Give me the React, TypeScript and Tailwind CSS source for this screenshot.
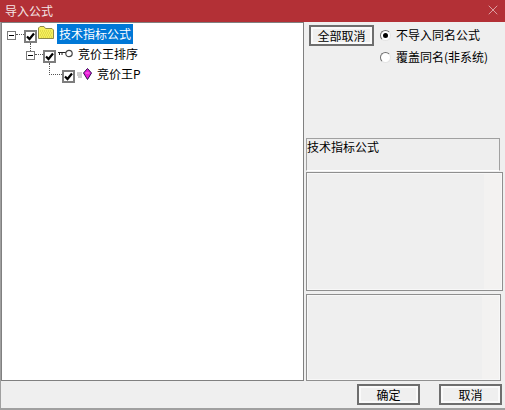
import { X } from 'lucide-react'

const font = { fontFamily: '"Noto Sans CJK SC", "Liberation Sans", sans-serif' }

function Expander() {
  return (
    <span className="mt-[2px] flex h-[9px] w-[9px] shrink-0 items-center justify-center border border-[#7a7a7a] bg-white">
      <span className="h-px w-[5px] bg-black" />
    </span>
  )
}

function Check() {
  return (
    <span className="mt-[4px] flex h-[13px] w-[13px] shrink-0 items-center justify-center border-2 border-[#7d7d7d] bg-white">
      <svg width="9" height="9" viewBox="0 0 9 9">
        <path d="M1 4.5 L3.5 7 L8 1.5" fill="none" stroke="#000" strokeWidth="2.2" />
      </svg>
    </span>
  )
}

function Folder() {
  return (
    <svg width="16" height="13" viewBox="0 0 16 13" className="shrink-0">
      <path d="M0.5 12.5 V2 L2 0.5 H6 L7.5 2.5 H14 L15.5 4 V12.5 Z" fill="#f6f05c" stroke="#8f8a48" />
      <path d="M2 5 H14 M3 7 H14 M2 9 H14 M3 11 H14" stroke="#cfc43a" strokeDasharray="1 1" />
    </svg>
  )
}

function KeyIcon() {
  return (
    <svg width="15" height="9" viewBox="0 0 15 9" className="shrink-0">
      <path d="M0 3.5 H8 M1.5 6 V3.5 M4 6 V3.5" stroke="#222" fill="none" />
      <circle cx="11" cy="4.5" r="3.2" fill="#fff" stroke="#444" strokeWidth="1.2" />
    </svg>
  )
}

function GemIcon() {
  return (
    <svg width="15" height="12" viewBox="0 0 15 12" className="shrink-0">
      <path d="M0 5 H5 M0 7 H5 M1 9 H5" stroke="#999" />
      <path d="M10.5 0.5 L14.5 5 L10.5 11.5 L6.5 5 Z" fill="#e81ad8" stroke="#2c1050" />
      <path d="M8.5 5 H12.5" stroke="#ff7af0" />
    </svg>
  )
}

function Radio({ checked, label }: { checked?: boolean; label: string }) {
  return (
    <div className="flex h-[22px] items-center">
      <span className="flex h-[11px] w-[11px] shrink-0 items-center justify-center rounded-full border border-t-[#6f6f6f] border-l-[#6f6f6f] border-r-[#e4e4e4] border-b-[#e4e4e4] bg-white">
        {checked && <span className="h-[5px] w-[5px] rounded-full bg-black" />}
      </span>
      <span className="ml-[5px] text-xs text-black">{label}</span>
    </div>
  )
}

function Dots({ className }: { className: string }) {
  return <span className={`shrink-0 border-dotted border-[#555] ${className}`} />
}

const dialogButton =
  'border-2 border-[#6e6e6e] bg-[#efefef] text-xs text-black shadow-[inset_0_0_0_2px_#fafafa]'

export default function App() {
  return (
    <div className="flex h-[410px] w-[505px] flex-col overflow-hidden bg-[#efefef]" style={font}>
      <div className="flex h-[22px] shrink-0 items-center justify-between bg-[#b33036] pl-[5px] pr-[4px]">
        <span className="text-xs text-[#f4e6e6]">导入公式</span>
        <X size={16} strokeWidth={1} className="-mt-[2px] text-[#f0d8d8]" />
      </div>

      <div className="flex h-[388px] flex-col border-b-2 border-l border-[#a0a0a0]">
        <div className="flex h-[359px] shrink-0">
          {/* tree */}
          <div className="h-full w-[303px] shrink-0 border border-[#808080] bg-white pl-[5px] pt-[1px]">
            <div className="flex h-5 items-center">
              <Expander />
              <Dots className="w-2 border-t" />
              <Check />
              <span className="mb-[3px] ml-px"><Folder /></span>
              <span className="ml-[3px] flex h-5 w-[76px] items-center justify-center bg-[#0078d7] text-xs text-white">技术指标公式</span>
            </div>
            <div className="relative flex h-5 items-center pl-[19px]">
              <Dots className="absolute left-[23px] -top-px h-2 border-l" />
              <Expander />
              <Dots className="w-2 border-t" />
              <Check />
              <span className="mb-[2px] ml-[2px]"><KeyIcon /></span>
              <span className="ml-[5px] text-xs text-black">竞价王排序</span>
            </div>
            <div className="flex h-5 items-center pl-[42px]">
              <Dots className="h-3 w-[13px] -translate-y-[5px] border-b border-l" />
              <Check />
              <span className="ml-[2px]"><GemIcon /></span>
              <span className="ml-[5px] text-xs text-black">竞价王P</span>
            </div>
          </div>

          {/* right column */}
          <div className="flex min-w-0 flex-1 flex-col pl-[2px]">
            <div className="flex h-[116px] shrink-0 items-start pl-[3px] pt-[2px]">
              <button className={`mt-px h-[21px] w-[65px] shrink-0 ${dialogButton}`}>全部取消</button>
              <div className="ml-[6px] flex flex-col">
                <Radio checked label="不导入同名公式" />
                <Radio label="覆盖同名(非系统)" />
              </div>
            </div>
            <div className="h-[33px] w-[194px] shrink-0 border-t border-l border-r border-b border-[#a0a0a0] border-b-white bg-[#eeeeee] text-xs leading-4 text-black">技术指标公式</div>
            <div className="mt-px flex h-[119px] w-[197px] shrink-0 border border-[#8f8f8f] bg-[#efefef] outline-1 -outline-offset-2 outline-[#f8f8f8]">
              <div className="flex-1" />
              <div className="w-[18px] bg-[#f3f2f1]" />
            </div>
            <div className="mt-[3px] flex min-h-0 w-[195px] flex-1 border border-[#8f8f8f] bg-[#efefef] outline-1 -outline-offset-2 outline-[#f8f8f8]">
              <div className="flex-1" />
              <div className="w-[18px] bg-[#f3f2f1]" />
            </div>
          </div>
        </div>

        <div className="flex flex-1 items-center justify-end gap-[19px] pr-[3px]">
          <button className={`h-[21px] w-[63px] ${dialogButton}`}>确定</button>
          <button className={`h-[21px] w-[63px] ${dialogButton}`}>取消</button>
        </div>
      </div>
    </div>
  )
}
